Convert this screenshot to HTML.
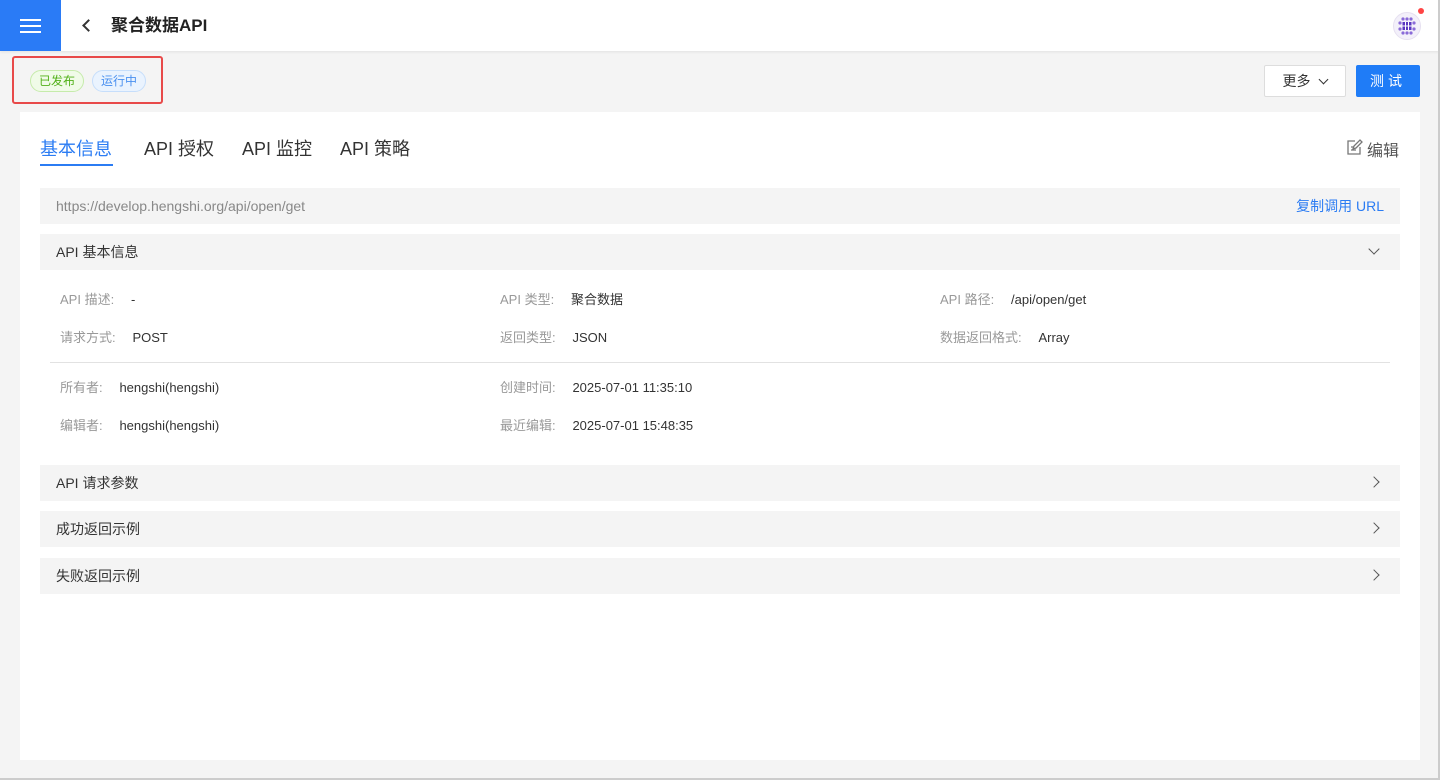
<!DOCTYPE html>
<html><head><meta charset="utf-8"><style>
*{box-sizing:border-box;margin:0;padding:0}
body{width:1440px;height:780px;background:#f4f4f4;font-family:"Liberation Sans","Noto Sans CJK SC",sans-serif;position:relative;overflow:hidden;color:#333}
.abs{position:absolute}
.hdr{left:0;top:0;width:1440px;height:51px;background:#fff;box-shadow:0 1px 3px rgba(0,0,0,.08)}
.menu{left:0;top:0;width:61px;height:51px;background:#2a7bf6}
.menu i{position:absolute;left:20px;width:21px;height:2px;background:#fff}
.title{left:111px;top:15px;font-size:17px;line-height:22px;font-weight:bold;color:#222}
.tag{top:70px;height:22px;border-radius:11px;font-size:12px;line-height:20px;padding:0 8px}
.btn{top:65px;height:32px;font-size:14px;line-height:30px;text-align:center;border-radius:2px}
.card{left:20px;top:112px;width:1400px;height:648px;background:#fff}
.tab{top:135px;font-size:18px;color:#333}
.bar{left:40px;width:1360px;height:36px;background:#f4f4f4;font-size:14px;line-height:36px;padding-left:16px;color:#333}
.lbl{font-size:13px;color:#999}
.val{font-size:13px;color:#333;margin-left:6px}
.chev{right:22px;top:13px;width:8px;height:8px;border-right:1.5px solid #555;border-bottom:1.5px solid #555}
</style></head><body>
<div class="abs hdr"></div>
<div class="abs menu"><i style="top:19px"></i><i style="top:25px"></i><i style="top:31px"></i></div>
<div class="abs" style="left:84px;top:21px;width:9px;height:9px;border-left:2px solid #333;border-bottom:2px solid #333;transform:rotate(45deg)"></div>
<div class="abs title">聚合数据API</div>
<div class="abs" style="left:1393px;top:12px;width:28px;height:28px;border-radius:50%;background:#f3f0fa;border:1px solid #e6e0f0"></div>
<svg class="abs" style="left:1397px;top:16px" width="20" height="20" viewBox="0 0 20 20"><g fill="#8a6ad8"><circle cx="6" cy="3" r="1.6"/><circle cx="10" cy="3" r="1.6"/><circle cx="14" cy="3" r="1.6"/><circle cx="3" cy="7" r="1.6"/><circle cx="17" cy="7" r="1.6"/><circle cx="3" cy="13" r="1.6"/><circle cx="17" cy="13" r="1.6"/><circle cx="6" cy="17" r="1.6"/><circle cx="10" cy="17" r="1.6"/><circle cx="14" cy="17" r="1.6"/></g><rect x="5.5" y="6" width="9" height="8" fill="#5a36c0"/><path d="M8.5 6v8M11.5 6v8M5.5 10h9" stroke="#fff" stroke-width="1"/></svg>
<div class="abs" style="left:1418px;top:8px;width:6px;height:6px;border-radius:50%;background:#f44"></div>
<div class="abs" style="left:12px;top:56px;width:151px;height:48px;border:2px solid #e84a4a;border-radius:3px"></div>
<div class="abs tag" style="left:30px;background:#f0fbe8;border:1px solid #c6ebab;color:#52b11a">已发布</div>
<div class="abs tag" style="left:92px;background:#eaf3fe;border:1px solid #c6defb;color:#4a90f0">运行中</div>
<div class="abs btn" style="left:1264px;width:82px;background:#fff;border:1px solid #ddd;color:#333">更多 <span style="display:inline-block;width:7px;height:7px;border-right:1.5px solid #333;border-bottom:1.5px solid #333;transform:rotate(45deg);margin:0 0 3px 6px"></span></div>
<div class="abs btn" style="left:1356px;width:64px;background:#1f7cf7;color:#fff;border:1px solid #1f7cf7;letter-spacing:4px">测试</div>
<div class="abs card"></div>
<div class="abs tab" style="left:40px;color:#2b7cf3">基本信息</div>
<div class="abs" style="left:40px;top:164px;width:73px;height:2px;background:#2b7cf3"></div>
<div class="abs tab" style="left:144px">API 授权</div>
<div class="abs tab" style="left:242px">API 监控</div>
<div class="abs tab" style="left:340px">API 策略</div>
<svg class="abs" style="left:1346px;top:139px" width="17" height="17" viewBox="0 0 17 17" fill="none" stroke="#777" stroke-width="1.3"><path d="M9 2H2v13h12V8"/><path d="M7 10l1-3 6-6 2 2-6 6z"/><path d="M5 8h3M5 11h5"/></svg>
<div class="abs" style="left:1367px;top:137px;font-size:16px;color:#555">编辑</div>
<div class="abs bar" style="top:188px;color:#888">https://develop.hengshi.org/api/open/get<span style="position:absolute;right:16px;color:#2b7cf3">复制调用 URL</span></div>
<div class="abs bar" style="top:234px">API 基本信息<div class="abs chev" style="transform:rotate(45deg);top:11px"></div></div>
<div class="abs lbl" style="left:60px;top:289px">API 描述:&nbsp;&nbsp;&nbsp;<span class="val">-</span></div>
<div class="abs lbl" style="left:500px;top:289px">API 类型:&nbsp;&nbsp;&nbsp;<span class="val">聚合数据</span></div>
<div class="abs lbl" style="left:940px;top:289px">API 路径:&nbsp;&nbsp;&nbsp;<span class="val">/api/open/get</span></div>
<div class="abs lbl" style="left:60px;top:327px">请求方式:&nbsp;&nbsp;&nbsp;<span class="val">POST</span></div>
<div class="abs lbl" style="left:500px;top:327px">返回类型:&nbsp;&nbsp;&nbsp;<span class="val">JSON</span></div>
<div class="abs lbl" style="left:940px;top:327px">数据返回格式:&nbsp;&nbsp;&nbsp;<span class="val">Array</span></div>
<div class="abs" style="left:50px;top:362px;width:1340px;height:1px;background:#e2e2e2"></div>
<div class="abs lbl" style="left:60px;top:377px">所有者:&nbsp;&nbsp;&nbsp;<span class="val">hengshi(hengshi)</span></div>
<div class="abs lbl" style="left:500px;top:377px">创建时间:&nbsp;&nbsp;&nbsp;<span class="val">2025-07-01 11:35:10</span></div>
<div class="abs lbl" style="left:60px;top:415px">编辑者:&nbsp;&nbsp;&nbsp;<span class="val">hengshi(hengshi)</span></div>
<div class="abs lbl" style="left:500px;top:415px">最近编辑:&nbsp;&nbsp;&nbsp;<span class="val">2025-07-01 15:48:35</span></div>
<div class="abs bar" style="top:465px">API 请求参数<div class="abs chev" style="transform:rotate(-45deg)"></div></div>
<div class="abs bar" style="top:511px">成功返回示例<div class="abs chev" style="transform:rotate(-45deg)"></div></div>
<div class="abs bar" style="top:558px">失败返回示例<div class="abs chev" style="transform:rotate(-45deg)"></div></div>
<div class="abs" style="left:1438px;top:0;width:2px;height:780px;background:#ccc"></div>
<div class="abs" style="left:0;top:778px;width:1440px;height:2px;background:#ccc"></div>
</body></html>
